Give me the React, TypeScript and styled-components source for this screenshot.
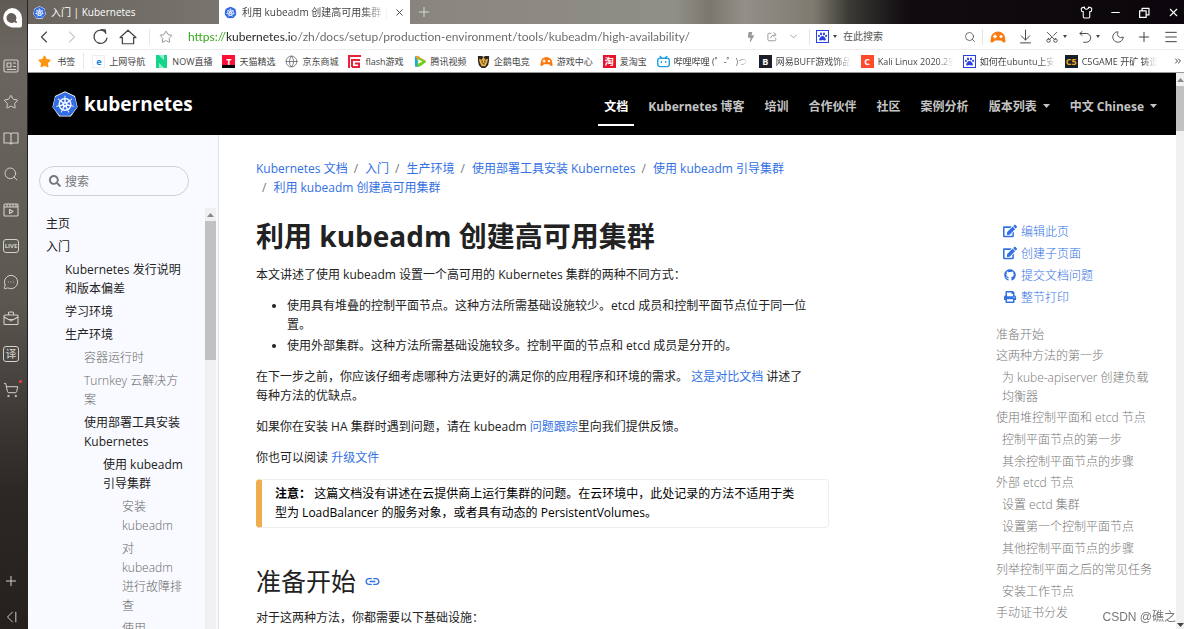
import React from 'react';
import styled, { createGlobalStyle, css } from 'styled-components';
import {
  ChevronLeft, ChevronRight, ChevronDown, Star, Search, X, Minus, Plus, Shirt,
  MessageCircleMore, ShoppingCart, ArrowDownToLine, Scissors, Moon, Menu, Globe, ChevronsRight,
} from 'lucide-react';
import { FaEdit, FaGithub, FaPrint, FaSearch, FaStar, FaPaw, FaBolt } from 'react-icons/fa';
import { SiKubernetes, SiBilibili } from 'react-icons/si';

const docFont = '"Open Sans", "Noto Sans CJK SC", sans-serif';
const blue = '#3371e3';

const Global = createGlobalStyle`
  * { box-sizing: border-box; }
  body { margin: 0; background: #fff; font: 12px/19px ${docFont}; color: #222; overflow: hidden; }
  a { color: ${blue}; text-decoration: none; }
  button { border: 0; padding: 0; background: none; color: inherit; font: inherit; display: flex; align-items: center; justify-content: center; }
  ul { list-style: none; margin: 0; padding: 0; }
  svg { flex: none; display: block; }
`;

const Window = styled.div`
  display: flex;
  height: 100vh;
`;

/* ---------- launcher strip ---------- */

const Strip = styled.nav`
  flex: none;
  width: 28px;
  display: flex;
  flex-direction: column;
  align-items: stretch;
  padding-right: 5px;
  border-right: 1px solid #25221f;
  color: #d3d0cc;
  background: linear-gradient(#5f5a54 0, #6b665f 8%, #625e58 30%, #5b5751 48%, #4a4742 58%, #3a3733 68%, #2c2825 78%, #25201d 100%);
`;
const StripLogo = styled.button`
  height: 36px;
  margin-bottom: 12px;
  padding-left: 2px !important;
`;
const StripButton = styled.button`
  height: 36px;
  position: relative;
`;
const StripFooter = styled.div`
  display: flex;
  flex-direction: column;
  gap: 12px;
  margin-top: auto;
`;
const FooterButton = styled.button`
  height: 24px;
`;
const Spacer = styled.div`
  flex: 1;
`;
const Badge = styled.span<{ $small?: boolean }>`
  width: 16px;
  height: ${p => (p.$small ? 14 : 16)}px;
  border: 1px solid currentColor;
  border-radius: 3px;
  font-size: ${p => (p.$small ? 6 : 11)}px;
  line-height: ${p => (p.$small ? 12 : 14)}px;
  font-weight: ${p => (p.$small ? 700 : 400)};
  text-align: center;
`;
const Dot = styled.i`
  position: absolute;
  right: 0;
  top: 8px;
  width: 3px;
  height: 3px;
  border-radius: 50%;
  background: #fb3b43;
`;

/* ---------- browser chrome ---------- */

const Browser = styled.div`
  flex: 1;
  min-width: 0;
  display: flex;
  flex-direction: column;
`;
const TabBar = styled.div`
  flex: none;
  height: 24px;
  display: flex;
  font-size: 9px;
  color: #fff;
  background: linear-gradient(90deg, #69645e 0, #77736d 16%, #8a8780 36%, #908e88 56%, #7b776e 59%, #928f89 62%, #7e7a70 68%, #3b3a34 71%, #110c10 76%, #0a060b 100%);
`;
const Tab = styled.div<{ $active?: boolean }>`
  width: 191px;
  display: flex;
  align-items: center;
  gap: 5px;
  padding: 0 5px;
  color: ${p => (p.$active ? '#444' : '#fff')};
  background: ${p => (p.$active ? '#fff' : 'transparent')};
`;
const fade = css`
  overflow: hidden;
  white-space: nowrap;
  mask-image: linear-gradient(90deg, #000 80%, transparent);
`;
const TabTitle = styled.span<{ $fade?: boolean }>`
  flex: 1;
  font-size: 10px;
  ${p => p.$fade && fade}
`;
const NewTab = styled.button`
  width: 27px;
  color: #d8d8d6 !important;
`;
const WindowButtons = styled.div`
  margin-left: auto;
  display: flex;
  gap: 16px;
  padding-right: 4px;
`;

const AddressBar = styled.div`
  flex: none;
  height: 26px;
  display: flex;
  align-items: center;
  border-bottom: 1px solid #eee;
  color: #444;
`;
const NavButtons = styled.div`
  display: flex;
  gap: 8px;
  padding: 0 11px 0 6px;
`;
const NavButton = styled.button`
  width: 20px;
  height: 20px;
`;
const Rule = styled.i`
  flex: none;
  width: 1px;
  height: 16px;
  background: #e6e6e6;
`;
const StarButton = styled.button`
  width: 32px;
  color: #888 !important;
`;
const UrlInput = styled.input`
  flex: 1;
  min-width: 0;
  height: 22px;
  border: 0;
  outline: 0;
  padding: 0 0 0 6px;
  font: 12px/22px Lato, sans-serif;
  color: transparent;
  background: linear-gradient(90deg, #2ba310 0 43px, #222 43px 110px, #666 110px);
  background-clip: text;
  -webkit-background-clip: text;
`;
const UrlTools = styled.div`
  display: flex;
  gap: 10px;
  padding: 0 10px 0 12px;
  color: #999;
`;
const SearchBox = styled.form`
  width: 172px;
  display: flex;
  align-items: center;
  gap: 4px;
  padding: 0 6px;
`;
const EngineInput = styled.input`
  flex: 1;
  min-width: 0;
  border: 0;
  outline: 0;
  padding: 0 2px;
  font: 10px/19px ${docFont};
  &::placeholder { color: #555; opacity: 1; }
`;
const Tools = styled.div`
  display: flex;
  align-items: center;
  gap: 11px;
  padding: 0 5px 0 7px;
`;
const ToolWithCaret = styled.button`
  gap: 4px;
`;
const UprightScissors = styled(Scissors)`
  rotate: -90deg;
`;

const Bookmarks = styled.div`
  flex: none;
  height: 23px;
  display: flex;
  align-items: center;
  gap: 8px;
  padding: 0 4px 0 10px;
  border-bottom: 1px solid #999;
  font-size: 9px;
  white-space: nowrap;
`;
const BookmarkList = styled.div`
  display: flex;
  gap: 10px;
`;
const Bookmark = styled.a`
  display: flex;
  align-items: center;
  gap: 4px;
  color: #444;
`;
const BookmarkName = styled.span<{ $long?: boolean }>`
  ${p => p.$long && css`width: 75px; ${fade}`}
`;
const Tile = styled.span<{ $bg: string; $fg?: string; $line?: string }>`
  width: 13px;
  height: 13px;
  display: flex;
  align-items: center;
  justify-content: center;
  background: ${p => p.$bg};
  color: ${p => p.$fg || '#fff'};
  border: ${p => (p.$line ? `1px solid ${p.$line}` : 0)};
  font-size: 9px;
  line-height: 11px;
  font-weight: 700;
`;

/* ---------- web page ---------- */

const Viewport = styled.div`
  flex: 1;
  min-height: 0;
  display: flex;
`;
const Page = styled.div`
  flex: 1;
  min-width: 0;
  display: flex;
  flex-direction: column;
`;
const ScrollTrack = styled.div<{ $w: number }>`
  flex: none;
  width: ${p => p.$w}px;
  background: #f0f0f0;
  color: #888;
  display: flex;
  flex-direction: column;
  align-items: center;
  overflow: hidden;
`;
const Thumb = styled.i<{ $h: number }>`
  width: 100%;
  height: ${p => p.$h}px;
  background: #c1c1c1;
`;
const ArrowUp = styled.i`
  height: 13px;
  display: flex;
  align-items: center;
`;
const ArrowDown = styled(ArrowUp)`
  margin-top: auto;
  height: 8px;
  color: #444;
`;

const Header = styled.header`
  flex: none;
  height: 62px;
  display: flex;
  align-items: center;
  justify-content: space-between;
  padding: 0 13px 0 24px;
  background: #000;
`;
const Brand = styled.a`
  display: flex;
  align-items: center;
  gap: 6px;
  color: #fff;
  font-size: 19px;
  font-weight: 700;
`;
const MainNav = styled.nav`
  display: flex;
  gap: 8px;
  padding-top: 4px;
`;
const NavLink = styled.a<{ $active?: boolean }>`
  display: flex;
  align-items: center;
  gap: 6px;
  height: 40px;
  padding: 2px 6px 0;
  border-bottom: 2px solid ${p => (p.$active ? '#fff' : 'transparent')};
  color: ${p => (p.$active ? '#fff' : '#c4c4c4')};
  font-weight: 700;
  white-space: nowrap;
`;

const Body = styled.div`
  flex: 1;
  min-height: 0;
  display: flex;
  overflow: hidden;
`;
const Sidebar = styled.aside`
  flex: none;
  width: 191px;
  display: flex;
  flex-direction: column;
  background: #f9faff;
  border-right: 1px solid #dee2e6;
`;
const SiteSearch = styled.label`
  flex: none;
  display: flex;
  align-items: center;
  gap: 4px;
  height: 30px;
  margin: 31px 29px 12px 11px;
  padding: 0 9px;
  border: 1px solid #ced0d6;
  border-radius: 15px;
  color: #777;
  input {
    width: 100%;
    border: 0;
    outline: 0;
    padding: 0;
    background: none;
    font: inherit;
  }
  input::placeholder { color: #777; opacity: 1; }
`;
const TreeArea = styled.div`
  flex: 1;
  min-height: 0;
  display: flex;
  justify-content: space-between;
  padding-right: 2px;
`;
const Tree = styled.ul`
  width: 158px;
  padding: 4px 0 0 18px;
  overflow: hidden;
`;
const TreeItem = styled.li<{ $level: number; $dim?: boolean }>`
  padding: 2px 0 2px ${p => p.$level * 19}px;
  font-weight: ${p => (p.$dim ? 300 : 400)};
  a { color: ${p => (p.$dim ? '#666' : '#222')}; }
`;

const Main = styled.main`
  flex: 1;
  min-width: 0;
  padding: 24px 0 0 37px;
`;
const Crumbs = styled.ol`
  list-style: none;
  display: flex;
  flex-wrap: wrap;
  max-width: 573px;
  margin: 0 0 20px;
  padding: 0;
  li + li::before { content: "/"; color: #777; padding: 0 7px 0 6px; }
`;
const Title = styled.h1`
  margin: 0 0 10px;
  font-size: 28px;
  line-height: 38px;
  font-weight: 700;
`;
const Para = styled.p`
  max-width: 552px;
  margin: 0 0 12px;
`;
const Bullets = styled.ul`
  list-style: disc;
  max-width: 573px;
  padding-left: 31px;
  margin-bottom: 12px;
  li + li { margin-top: 2px; }
`;
const Note = styled.div`
  max-width: 573px;
  padding: 4px 32px 5px 13px;
  border: 1px solid #eee;
  border-left: 6px solid #f0ad4e;
  border-radius: 4px;
  color: #000;
`;
const Section = styled.h2`
  display: flex;
  align-items: center;
  gap: 8px;
  margin: 36px 0 10px;
  font-size: 25px;
  line-height: 34px;
  font-weight: 400;
`;

const Aside = styled.aside`
  flex: none;
  width: 200px;
  padding: 85px 20px 0 20px;
  font-weight: 300;
`;
const PageActions = styled.ul`
  padding-left: 7px;
  margin-bottom: 17px;
  a { display: flex; align-items: center; gap: 4px; height: 22px; }
  a svg { width: 14px; }
`;
const Toc = styled.ul`
  a { color: #777; }
`;
const TocItem = styled.li<{ $sub?: boolean }>`
  padding: 1px 0 ${p => (p.$sub ? '2px 6px' : '2px 0')};
  line-height: ${p => (p.$sub ? 19 : 18)}px;
`;
const Watermark = styled.div`
  position: fixed;
  right: 8px;
  bottom: 2px;
  color: #777;
  font: 12px/19px "Liberation Sans", "Noto Sans CJK SC", sans-serif;
`;

/* ---------- drawings ---------- */

const KubeMark = ({ size }: { size: number }) => (
  <svg width={size} height={size} viewBox="0 0 26 26">
    <path d="M13 .3 23 5.100 25.600 16 18.800 25.500H7.200L.4 16 3 5.100Z" fill="#fff" />
    <SiKubernetes x="1" y="1" size={24} color="#326ce5" />
  </svg>
);

const BrowserLogo = () => (
  <svg width="20" height="20" viewBox="0 0 20 20">
    <path fill="#fff" fillRule="evenodd" d="M10 0a10 10 0 0 1 10 10v7.500q0 2-2 2h-8A9.800 9.800 0 0 1 10 0Zm-.5 5a5 5 0 1 0 0 10c1.200 0 2.200-.4 3-1l1.700 1.300 1-1.300-1.500-1.400A5 5 0 0 0 9.500 5Z" />
  </svg>
);

const Line = ({ d, size = 16, w = 1.1 }: { d: string; size?: number; w?: number }) => (
  <svg width={size} height={size} viewBox="0 0 16 16" fill="none" stroke="currentColor" strokeWidth={w} strokeLinejoin="round">
    <path d={d} />
  </svg>
);

const shapes = {
  news: 'M2.500 2h11q1.500 0 1.500 1.500v9q0 1.500-1.500 1.500h-11Q1 14 1 12.500v-9Q1 2 2.500 2ZM4 5h4v4H4ZM10 5h3M10 8.500h3M4 11.500h9',
  book: 'M1 3h5.500Q8 3 8 4.500 8 3 9.500 3H15v10H9.500L8 14l-1.500-1H1ZM8 4.500V14',
  video: 'M2 2h12q1 0 1 1v10q0 1-1 1H2q-1 0-1-1V3q0-1 1-1ZM1 5h14M4 2v3M7 2v3M10 2v3M13 2v3M6.500 7.500v4l3.500-2Z',
  bag: 'M2 5h12q1 0 1 1v7.500q0 1-1 1H2q-1 0-1-1V6q0-1 1-1ZM5.500 5V3q0-1 1-1h3q1 0 1 1v2M1 7l4.500 2.500h5L15 7M6 9.500q2 3 4 0',
  home: 'M1 8.500 8 2l7 6.500h-2V14H3V8.500Z',
  reload: 'M13 4.500A6.200 6.200 0 1 0 14.200 9M8 1.600l4.500.2L13 5.500',
  share: 'M7 3H4Q2.500 3 2.500 4.500v7Q2.500 13 4 13h7.500q1.500 0 1.500-1.500V9M6 9.500Q7 5 12.500 5M10 2l3.500 3L10 7.500',
  undo: 'M5 1.500 2 4l3 2.500M2 4h7.500a5 5 0 0 1 0 10H6',
  restore: 'M2 6h8v8H2ZM5 6V3h8.500v8H10',
  collapse: 'M10 2 4 8l6 6M13.500 2v12',
};

const Caret = ({ up }: { up?: boolean }) => (
  <svg width="7" height="4" viewBox="0 0 7 4" fill="currentColor">
    <path d={up ? 'M0 4h7L3.500 0Z' : 'M0 0h7L3.500 4Z'} />
  </svg>
);
const SmallCaret = () => (
  <svg width="4" height="3" viewBox="0 0 4 3" fill="currentColor"><path d="M0 0h4L2 3Z" /></svg>
);

const GamePad = ({ size }: { size: number }) => (
  <svg width={size} height={size} viewBox="0 0 16 16">
    <path d="M1 9a7 6.500 0 0 1 14 0l.5 3q0 2-2 1.500L11 11.500H5L2.500 13.500Q.5 14 .5 12Z" fill="#fb7a10" />
    <path d="M5 5.500v4M3 7.500h4" stroke="#fff" strokeWidth="1.300" />
    <circle cx="11" cy="7.500" r="1.500" fill="#fff" />
  </svg>
);

const LinkGlyph = () => (
  <svg width="17" height="17" viewBox="0 0 24 24" fill={blue}>
    <path d="M3.900 12c0-1.710 1.390-3.100 3.100-3.100h4V7H7c-2.760 0-5 2.240-5 5s2.240 5 5 5h4v-1.900H7c-1.710 0-3.100-1.390-3.100-3.100zM8 13h8v-2H8v2zm9-6h-4v1.900h4c1.710 0 3.100 1.390 3.100 3.100s-1.390 3.100-3.100 3.100h-4V17h4c2.760 0 5-2.240 5-5s-2.240-5-5-5z" />
  </svg>
);

const TencentVideo = () => (
  <svg width="13" height="13" viewBox="0 0 14 14">
    <path d="M2 1Q1 1 1 3v8q0 2 2 2l3-1V2Z" fill="#1fa4fc" />
    <path d="M2 1q1-.5 3 .5L12 6q1 1 0 2L8 10 3 5Z" fill="#ff9a1e" />
    <path d="M3 13q5-1 9.500-5 1-1-.5-2L4 3Z" fill="#6fcf1b" />
    <path d="M4.500 4.500v5l4.500-2.500Z" fill="#fff" />
  </svg>
);

const Penguin = () => (
  <svg width="13" height="13" viewBox="0 0 14 14">
    <path d="M1 1h4l2 1 2-1h4v5l-1 5-3 3H5l-3-3-1-5Z" fill="#2a2725" />
    <path d="M2 4 5 5l2-3 2 3 3-1-1 4-2 4H5L3 8Z" fill="#eab042" />
    <path d="M5 6h1v2H5zM8 6h1v2H8zM6 9h2v1H6z" fill="#2a2725" />
  </svg>
);

const FlashMark = () => (
  <svg width="13" height="13" viewBox="0 0 13 13" fill="none" stroke="#e8223c" strokeWidth="2">
    <path d="M1 13V1h12M4 12V5h8M4 12h7V8.500H7" />
  </svg>
);

const NowMark = () => (
  <svg width="13" height="13" viewBox="0 0 13 13" fill="#14d58c">
    <path d="M1 0h3l5 5V0h3v13H9L4 8v5H1Z" /><path d="M4 0h5v5ZM4 13h5L4 8Z" opacity=".45" />
  </svg>
);

const BaiduTile = () => (
  <Tile $bg="#fff" $fg="#2b3fe0" $line="#2b3fe0"><FaPaw size={9} /></Tile>
);

/* ---------- content ---------- */

const bookmarks: { name: string; icon: React.ReactNode; long?: boolean }[] = [
  { name: '上网导航', icon: <Tile $bg="#fff" $fg="#1683e6" $line="#eee">e</Tile> },
  { name: 'NOW直播', icon: <NowMark /> },
  { name: '天猫精选', icon: <Tile $bg="linear-gradient(#ff0f36 75%, #000 75%)">T</Tile> },
  { name: '京东商城', icon: <Globe size={13} strokeWidth={1.5} color="#666" /> },
  { name: 'flash游戏', icon: <FlashMark /> },
  { name: '腾讯视频', icon: <TencentVideo /> },
  { name: '企鹅电竞', icon: <Penguin /> },
  { name: '游戏中心', icon: <GamePad size={13} /> },
  { name: '爱淘宝', icon: <Tile $bg="#e8132b">淘</Tile> },
  { name: '哔哩哔哩 (゜-゜)つロ', icon: <SiBilibili size={13} color="#1da1e0" />, long: true },
  { name: '网易BUFF游戏饰品交易', icon: <Tile $bg="#1c1e2a">B</Tile>, long: true },
  { name: 'Kali Linux 2020.2安装', icon: <Tile $bg="#ff4a2b">C</Tile>, long: true },
  { name: '如何在ubuntu上安装', icon: <BaiduTile />, long: true },
  { name: 'C5GAME 开矿 铸造', icon: <Tile $bg="#14202c" $fg="#f6a623">C5</Tile>, long: true },
];

const navLinks = [
  { name: '文档', active: true }, { name: 'Kubernetes 博客' }, { name: '培训' }, { name: '合作伙伴' },
  { name: '社区' }, { name: '案例分析' }, { name: '版本列表', menu: true }, { name: '中文 Chinese', menu: true },
];

const tree = [
  { name: '主页', level: 0 },
  { name: '入门', level: 0 },
  { name: 'Kubernetes 发行说明和版本偏差', level: 1 },
  { name: '学习环境', level: 1 },
  { name: '生产环境', level: 1 },
  { name: '容器运行时', level: 2, dim: true },
  { name: 'Turnkey 云解决方案', level: 2, dim: true },
  { name: '使用部署工具安装 Kubernetes', level: 2 },
  { name: '使用 kubeadm 引导集群', level: 3 },
  { name: '安装 kubeadm', level: 4, dim: true },
  { name: '对 kubeadm 进行故障排查', level: 4, dim: true },
  { name: '使用 kubeadm 创建集群', level: 4, dim: true },
];

const crumbs = ['Kubernetes 文档', '入门', '生产环境', '使用部署工具安装 Kubernetes', '使用 kubeadm 引导集群', '利用 kubeadm 创建高可用集群'];

const toc = [
  { name: '准备开始' },
  { name: '这两种方法的第一步' },
  { name: '为 kube-apiserver 创建负载均衡器', sub: true },
  { name: '使用堆控制平面和 etcd 节点' },
  { name: '控制平面节点的第一步', sub: true },
  { name: '其余控制平面节点的步骤', sub: true },
  { name: '外部 etcd 节点' },
  { name: '设置 ectd 集群', sub: true },
  { name: '设置第一个控制平面节点', sub: true },
  { name: '其他控制平面节点的步骤', sub: true },
  { name: '列举控制平面之后的常见任务' },
  { name: '安装工作节点', sub: true },
  { name: '手动证书分发' },
];

const thin = { size: 16, strokeWidth: 1.5 };

export default function App() {
  return (
    <Window>
      <Global />
      <Strip>
        <StripLogo aria-label="浏览器"><BrowserLogo /></StripLogo>
        <StripButton aria-label="资讯"><Line d={shapes.news} /></StripButton>
        <StripButton aria-label="收藏"><Star {...thin} /></StripButton>
        <StripButton aria-label="阅读"><Line d={shapes.book} /></StripButton>
        <StripButton aria-label="搜索"><Search {...thin} /></StripButton>
        <StripButton aria-label="视频"><Line d={shapes.video} /></StripButton>
        <StripButton><Badge $small>LIVE</Badge></StripButton>
        <StripButton aria-label="消息"><MessageCircleMore {...thin} /></StripButton>
        <StripButton aria-label="工具"><Line d={shapes.bag} /></StripButton>
        <StripButton><Badge>译</Badge></StripButton>
        <StripButton aria-label="购物"><ShoppingCart {...thin} /><Dot /></StripButton>
        <StripFooter>
          <FooterButton aria-label="添加"><Plus {...thin} /></FooterButton>
          <FooterButton aria-label="收起"><Line d={shapes.collapse} size={14} /></FooterButton>
        </StripFooter>
      </Strip>

      <Browser>
        <TabBar>
          <Tab><KubeMark size={13} /><TabTitle>入门 | Kubernetes</TabTitle></Tab>
          <Tab $active>
            <KubeMark size={13} />
            <TabTitle $fade>利用 kubeadm 创建高可用集群 | Kubernetes</TabTitle>
            <button aria-label="关闭标签页"><X size={11} /></button>
          </Tab>
          <NewTab aria-label="新标签页"><Plus size={16} strokeWidth={1.5} /></NewTab>
          <WindowButtons>
            <button aria-label="皮肤"><Shirt size={13} /></button>
            <button aria-label="最小化"><Minus size={13} /></button>
            <button aria-label="还原"><Line d={shapes.restore} size={13} w={1.5} /></button>
            <button aria-label="关闭"><X size={13} /></button>
          </WindowButtons>
        </TabBar>

        <AddressBar>
          <NavButtons>
            <NavButton aria-label="后退"><ChevronLeft size={20} strokeWidth={1.4} /></NavButton>
            <NavButton aria-label="前进"><ChevronRight size={20} strokeWidth={1.4} color="#ccc" /></NavButton>
            <NavButton aria-label="刷新"><Line d={shapes.reload} size={17} w={1.2} /></NavButton>
            <NavButton aria-label="主页"><Line d={shapes.home} size={18} /></NavButton>
          </NavButtons>
          <Rule />
          <StarButton aria-label="收藏此页"><Star size={14} strokeWidth={1.5} /></StarButton>
          <UrlInput aria-label="地址" defaultValue="https://kubernetes.io/zh/docs/setup/production-environment/tools/kubeadm/high-availability/" />
          <UrlTools>
            <button aria-label="加速"><FaBolt size={10} /></button>
            <button aria-label="分享"><Line d={shapes.share} size={12} w={1.3} /></button>
            <button aria-label="更多"><ChevronDown size={11} /></button>
          </UrlTools>
          <Rule />
          <SearchBox>
            <BaiduTile />
            <SmallCaret />
            <EngineInput aria-label="搜索引擎" placeholder="在此搜索" />
            <button aria-label="搜索" type="button"><Search size={12} strokeWidth={1.5} /></button>
          </SearchBox>
          <Rule />
          <Tools>
            <button aria-label="游戏"><GamePad size={16} /></button>
            <button aria-label="下载"><ArrowDownToLine size={17} strokeWidth={1.4} /></button>
            <ToolWithCaret aria-label="截图"><UprightScissors size={14} strokeWidth={1.5} /><SmallCaret /></ToolWithCaret>
            <ToolWithCaret aria-label="撤销"><Line d={shapes.undo} size={14} /><SmallCaret /></ToolWithCaret>
            <button aria-label="夜间"><Moon size={14} strokeWidth={1.5} /></button>
            <button aria-label="添加"><Plus {...thin} /></button>
            <button aria-label="菜单"><Menu {...thin} /></button>
          </Tools>
        </AddressBar>

        <Bookmarks>
          <Bookmark href="#"><FaStar size={13} color="#ff9411" /><BookmarkName>&nbsp;书签</BookmarkName></Bookmark>
          <Rule />
          <BookmarkList>
            {bookmarks.map(b => (
              <Bookmark href="#" key={b.name}>{b.icon}<BookmarkName $long={b.long}>{b.name}</BookmarkName></Bookmark>
            ))}
          </BookmarkList>
          <Spacer />
          <button aria-label="更多书签"><ChevronsRight size={10} /></button>
        </Bookmarks>

        <Viewport>
          <Page>
            <Header>
              <Brand href="#"><KubeMark size={26} />kubernetes</Brand>
              <MainNav>
                {navLinks.map(n => (
                  <NavLink href="#" key={n.name} $active={n.active}>{n.name}{n.menu && <Caret />}</NavLink>
                ))}
              </MainNav>
            </Header>
            <Body>
              <Sidebar>
                <SiteSearch>
                  <FaSearch size={12} />
                  <input type="search" aria-label="搜索" placeholder="搜索" />
                </SiteSearch>
                <TreeArea>
                  <Tree>
                    {tree.map(t => (
                      <TreeItem key={t.name} $level={t.level} $dim={t.dim}><a href="#">{t.name}</a></TreeItem>
                    ))}
                  </Tree>
                  <ScrollTrack $w={11}><ArrowUp><Caret up /></ArrowUp><Thumb $h={139} /></ScrollTrack>
                </TreeArea>
              </Sidebar>

              <Main>
                <Crumbs>{crumbs.map(c => <li key={c}><a href="#">{c}</a></li>)}</Crumbs>
                <Title>利用 kubeadm 创建高可用集群</Title>
                <Para>本文讲述了使用 kubeadm 设置一个高可用的 Kubernetes 集群的两种不同方式：</Para>
                <Bullets>
                  <li>使用具有堆叠的控制平面节点。这种方法所需基础设施较少。etcd 成员和控制平面节点位于同一位置。</li>
                  <li>使用外部集群。这种方法所需基础设施较多。控制平面的节点和 etcd 成员是分开的。</li>
                </Bullets>
                <Para>在下一步之前，你应该仔细考虑哪种方法更好的满足你的应用程序和环境的需求。 <a href="#">这是对比文档</a> 讲述了每种方法的优缺点。</Para>
                <Para>如果你在安装 HA 集群时遇到问题，请在 kubeadm <a href="#">问题跟踪</a>里向我们提供反馈。</Para>
                <Para>你也可以阅读 <a href="#">升级文件</a></Para>
                <Note><strong>注意：</strong> 这篇文档没有讲述在云提供商上运行集群的问题。在云环境中，此处记录的方法不适用于类型为 LoadBalancer 的服务对象，或者具有动态的 PersistentVolumes。</Note>
                <Section>准备开始<a href="#" aria-label="准备开始"><LinkGlyph /></a></Section>
                <Para>对于这两种方法，你都需要以下基础设施：</Para>
              </Main>

              <Aside>
                <PageActions>
                  <li><a href="#"><FaEdit size={14} />编辑此页</a></li>
                  <li><a href="#"><FaEdit size={14} />创建子页面</a></li>
                  <li><a href="#"><FaGithub size={12} />提交文档问题</a></li>
                  <li><a href="#"><FaPrint size={12} />整节打印</a></li>
                </PageActions>
                <Toc>
                  {toc.map(t => <TocItem key={t.name} $sub={t.sub}><a href="#">{t.name}</a></TocItem>)}
                </Toc>
              </Aside>
            </Body>
          </Page>
          <ScrollTrack $w={8}>
            <ArrowUp><Caret up /></ArrowUp><Thumb $h={45} />
            <ArrowDown><Caret /></ArrowDown>
          </ScrollTrack>
        </Viewport>
      </Browser>
      <Watermark>CSDN @礁之</Watermark>
    </Window>
  );
}
